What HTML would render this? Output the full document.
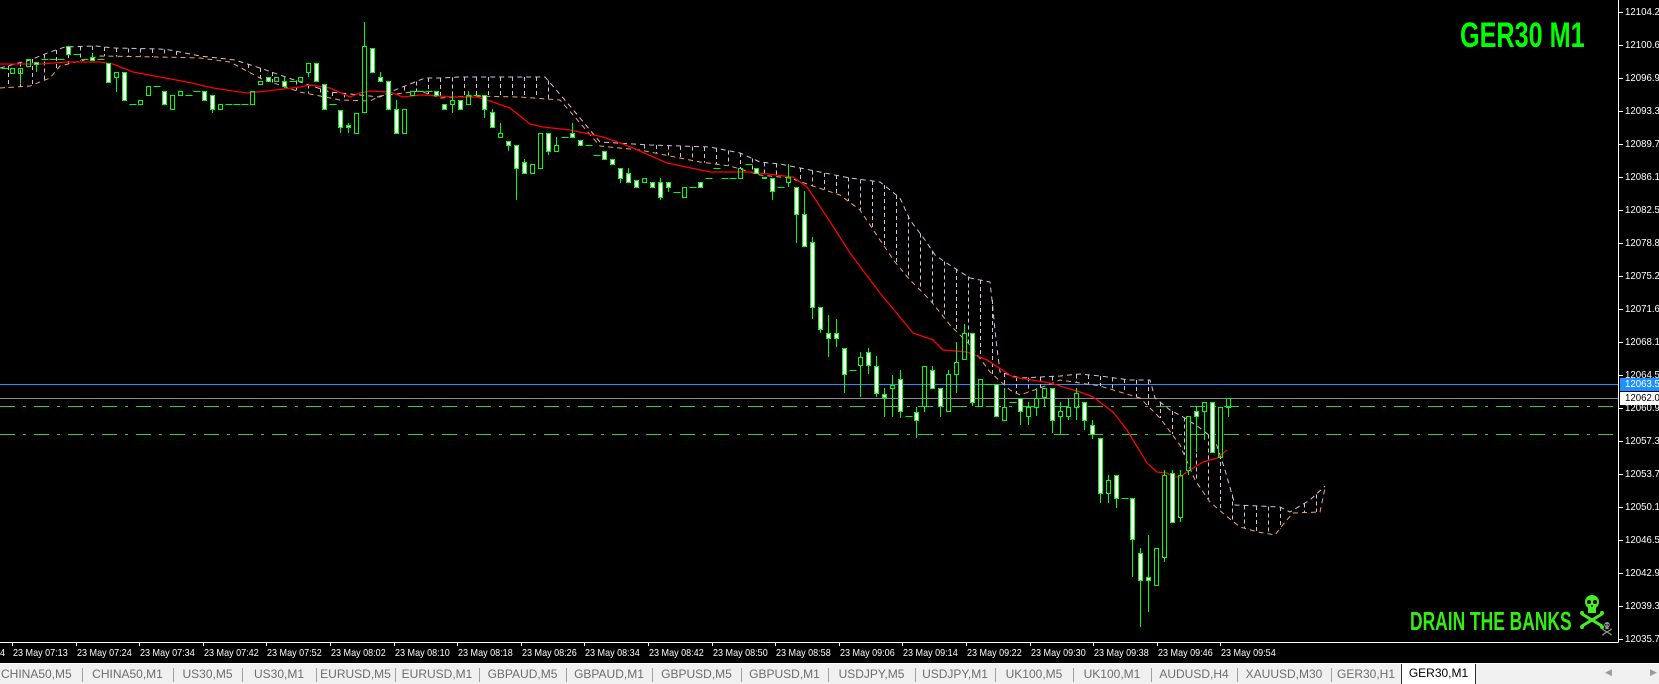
<!DOCTYPE html>
<html><head><meta charset="utf-8">
<style>
html,body{margin:0;padding:0;background:#000;width:1659px;height:684px;overflow:hidden;font-family:"Liberation Sans",sans-serif}
#wrap{position:relative;width:1659px;height:684px;background:#000}
svg{position:absolute;left:0;top:0}
.pl{position:absolute;left:1625px;font-size:10.5px;color:#fff;line-height:12px;white-space:nowrap;transform:scaleX(0.92);transform-origin:left top}
.tl{position:absolute;top:647px;font-size:10.5px;color:#fff;white-space:nowrap;line-height:13px;transform:scaleX(0.86);transform-origin:left top}
#tabs{position:absolute;left:0;top:663px;width:1659px;height:21px;background:#f0f0f0;border-top:1px solid #fff;box-sizing:border-box}
.tab{position:absolute;top:1px;height:20px;font-size:12px;color:#6d6d6d;line-height:19px;text-align:center;white-space:nowrap;box-sizing:border-box}
.sep{position:absolute;top:4px;width:1px;height:14px;background:#a0a0a0}
</style></head><body><div id="wrap">
<svg id="ch" width="1659" height="684" xmlns="http://www.w3.org/2000/svg" shape-rendering="crispEdges"></svg>

<div style="position:absolute;left:1460px;top:16px;font-weight:bold;font-size:35px;color:#00ff00;transform:scaleX(0.72);transform-origin:left top;white-space:nowrap">GER30 M1</div>
<div style="position:absolute;left:1410px;top:606px;font-weight:bold;font-size:26px;color:#33ee11;transform:scaleX(0.67);transform-origin:left top;white-space:nowrap">DRAIN THE BANKS</div>

<div class="pl" style="top:6px">12104.20</div>
<div class="pl" style="top:39px">12100.60</div>
<div class="pl" style="top:72px">12096.90</div>
<div class="pl" style="top:105px">12093.30</div>
<div class="pl" style="top:138px">12089.70</div>
<div class="pl" style="top:171px">12086.10</div>
<div class="pl" style="top:204px">12082.50</div>
<div class="pl" style="top:237px">12078.80</div>
<div class="pl" style="top:270px">12075.20</div>
<div class="pl" style="top:303px">12071.60</div>
<div class="pl" style="top:336px">12068.10</div>
<div class="pl" style="top:369px">12064.50</div>
<div class="pl" style="top:402px">12060.90</div>
<div class="pl" style="top:435px">12057.30</div>
<div class="pl" style="top:468px">12053.70</div>
<div class="pl" style="top:501px">12050.10</div>
<div class="pl" style="top:534px">12046.50</div>
<div class="pl" style="top:567px">12042.90</div>
<div class="pl" style="top:600px">12039.30</div>
<div class="pl" style="top:633px">12035.70</div>
<div style="position:absolute;top:378px;left:1620px;background:#1e90ff;width:39px;height:13px"></div>
<div class="pl" style="top:378px">12063.59</div>
<div style="position:absolute;top:392px;left:1620px;background:#fff;width:39px;height:13px"></div>
<div class="pl" style="top:392px;color:#000">12062.08</div>

<div class="tl" style="left:0">4</div>
<div id="times"></div>

<div id="tabs"></div>
</div>
<script>
var S='http://www.w3.org/2000/svg',svg=document.getElementById('ch');
function el(n,a){var e=document.createElementNS(S,n);for(var k in a)e.setAttribute(k,a[k]);svg.appendChild(e);return e;}
var G='#00ff00';
el('line',{x1:0,y1:642.5,x2:1618.5,y2:642.5,stroke:'#fff'});
el('line',{x1:1618.5,y1:0,x2:1618.5,y2:642.5,stroke:'#fff'});
for(var k=0;k<20;k++){var y=12+33*k;el('line',{x1:1619,y1:y+0.5,x2:1623,y2:y+0.5,stroke:'#fff'});}
el('line',{x1:0,y1:384.5,x2:1618,y2:384.5,stroke:'#1e90ff'});
el('line',{x1:0,y1:398.5,x2:1618,y2:398.5,stroke:'#8c8c8c'});
el('line',{x1:0,y1:406.5,x2:1618,y2:406.5,stroke:'#32cd32','stroke-dasharray':'15 8 3 8'});
el('line',{x1:0,y1:434.5,x2:1618,y2:434.5,stroke:'#32cd32','stroke-dasharray':'15 8 3 8'});
var up=[[0,68],[30,60],[50,52],[65,47],[95,46],[115,48],[160,49],[170,50],[200,56],[235,60],[260,68],[300,82],[330,92],[360,95],[380,97],[390,92],[410,84],[425,78],[440,78],[460,77],[545,77],[570,106],[600,142],[650,145],[710,147],[740,153],[760,162],[780,164],[820,172],[850,178],[880,182],[900,198],[910,220],[925,240],[935,255],[945,262],[970,278],[990,282],[992,300],[996,340],[1000,372],[1020,378],[1060,376],[1080,374],[1100,376],[1130,380],[1150,380],[1155,398],[1170,410],[1185,418],[1200,428],[1215,440],[1225,470],[1235,505],[1280,507],[1290,512],[1310,500],[1325,486]];
var lo=[[0,88],[30,86],[50,78],[60,66],[100,56],[160,57],[200,58],[230,62],[262,79],[300,92],[340,100],[370,101],[380,96],[420,91],[440,98],[470,96],[520,97],[560,100],[600,146],[640,150],[700,162],[730,166],[760,175],[790,178],[810,185],[840,195],[860,210],[880,240],[895,262],[910,280],[930,300],[950,325],[970,345],[990,372],[1010,390],[1020,395],[1040,388],[1060,380],[1100,386],[1140,398],[1160,418],[1180,445],[1195,480],[1210,502],[1225,515],[1240,527],[1258,532],[1275,535],[1285,522],[1293,513],[1320,512],[1325,488]];
function pts(a){return a.map(function(p){return p[0]+','+p[1]}).join(' ')}
function interp(a,x){for(var i=1;i<a.length;i++){if(a[i][0]>=x){var p=a[i-1],q=a[i];return p[1]+(q[1]-p[1])*(x-p[0])/((q[0]-p[0])||1);}}return a[a.length-1][1];}
for(var x=8;x<1325;x+=12){var a=interp(up,x),b=interp(lo,x);if(Math.abs(a-b)>6)el('line',{x1:x+.5,y1:a,x2:x+.5,y2:b,stroke:'#d8bfd8','stroke-dasharray':'4 3'});}
el('polyline',{points:pts(up),fill:'none',stroke:'#d8bfd8','stroke-dasharray':'5 4','shape-rendering':'auto'});
el('polyline',{points:pts(lo),fill:'none',stroke:'#f4a460','stroke-dasharray':'5 4','shape-rendering':'auto'});
var ma=[[0,64],[40,64],[67,62],[100,62],[113,64],[133,72],[160,77],[187,82],[213,88],[233,91],[247,93],[267,91],[283,89],[300,87],[310,85],[330,88],[350,97],[360,93],[370,91],[390,92],[403,97],[420,95],[457,97],[477,97],[487,100],[510,108],[530,124],[543,127],[570,130],[603,137],[623,144],[633,148],[667,163],[710,172],[750,172],[793,177],[807,187],[827,217],[850,253],[880,293],[913,333],[933,340],[943,350],[967,352],[987,360],[1013,377],[1050,383],[1080,392],[1093,397],[1113,412],[1127,430],[1147,463],[1157,472],[1167,473],[1173,477],[1180,477],[1190,470],[1203,462],[1217,458],[1227,450]];
el('polyline',{points:pts(ma),fill:'none',stroke:'#ff0000','stroke-width':1.3,'shape-rendering':'auto'});
var C=[['d',68],['g',68,73],['g',68,73,68,83],['g',59,66],['w',62,64,62,72],['d',59,52,59],['d',59,52,59],['d',59],['w',46,54],['d',54],
['d',59],['w',57,60,53,60],['d',59,54,59],['w',63,82],['g',72,77,72,92],['w',72,100],['d',104],['g',100,104],['g',86,95],['d',86],
['w',91,104],['g',95,109],['g',91,95],['d',95],['d',91],['w',91,100],['w',95,109,95,113],['g',104,109],['d',104],['d',104],
['d',104],['g',91,104],['g',81,84],['w',77,81],['g',77,81],['w',81,86,77,88],['d',81,77,86],['g',77,81],['g',63,72,63,77],['w',63,81],
['w',84,109],['d',104,95,104],['w',110,127,110,133],['w',125,127,123,133],['g',113,133],['g',46,112,22,112],['w',48,72],['w',77,81,72,81],['w',81,109],['w',109,133,100,133],
['g',109,133],['g',91,95],['d',91],['d',91],['w',91,95],['w',104,109],['g',100,104,95,113],['w',100,109],['g',95,104,91,104],['d',95],
['w',95,109,95,118],['w',112,127,109,127],['g',133,137,123,137],['w',141,145,141,151],['w',145,168,145,200],['w',162,173,159,173],['g',164,173],['g',133,168],['w',133,151,133,155],['g',145,151,137,151],
['d',137,127,137],['w',133,137,123,137],['w',140,145],['d',145,141,145],['d',155],['w',151,159],['w',159,164],['w',168,178,168,183],['w',173,182,168,182],['w',180,187],
['g',178,182],['w',182,187],['w',182,197,178,200],['w',182,187,182,192],['d',192,178,197],['g',187,197],['d',187],['w',182,187],['d',178,164,178],['d',168],
['d',178],['d',178],['g',168,178],['d',164,159,164],['w',168,173],['w',177,178],['w',178,191,178,200],['d',187,187,200],['g',177,182,164,187],['w',187,214,187,243],
['w',214,246,191,246],['w',242,307,237,319],['w',307,329,307,333],['w',333,338,315,357],['w',333,338,319,347],['w',348,374,348,393],['d',370,370,425],['g',357,365,352,397],['w',352,365,348,374],['w',366,393,356,397],
['w',394,397,388,417],['g',385,388,375,417],['w',379,411,370,418],['d',416,397,434],['w',412,420,407,438],['g',366,406,366,412],['w',370,388,366,388],['w',388,406,388,417],['g',374,411,370,411],['g',362,374,342,393],
['g',333,359,324,359],['w',333,402,333,406],['g',379,406],['d',384,374,406],['w',384,416],['g',407,420,388,420],['d',402,384,402],['w',398,411,398,425],['g',407,416,402,425],['g',398,407,388,416],
['g',388,397,388,407],['w',388,420,388,433],['g',411,416,402,434],['g',407,416,398,420],['g',393,407,388,420],['w',402,420,402,430],['w',425,434,420,439],['w',438,493,438,503],['g',480,493,475,503],['w',475,498,475,508],
['d',498,489,512],['w',498,539,498,577],['w',553,580,548,627],['w',577,580,535,612],['g',548,585],['g',475,557,470,562],['w',473,522,470,522],['g',475,517,470,522],['g',416,470,416,475],['w',411,416,407,452],
['g',402,411,402,440],['w',402,452],['g',407,457],['g',398,407,398,417]];
C.forEach(function(c,i){var x=4+8*i+.5,t=c[0],a=c[1],b=c[2]||a,wt=c[3]!==undefined?c[3]:a,wb=c[4]!==undefined?c[4]:b;
 if(t=='d'){el('line',{x1:x,y1:Math.min(wt,a),x2:x,y2:Math.max(wb,a)+1,stroke:G});el('line',{x1:x-3,y1:a+.5,x2:x+4,y2:a+.5,stroke:G});return;}
 if(wt<a)el('line',{x1:x,y1:wt,x2:x,y2:a,stroke:G});
 if(wb>b)el('line',{x1:x,y1:b,x2:x,y2:wb,stroke:G});
 el('rect',{x:x-2,y:a+.5,width:4,height:Math.max(b-a,1),fill:t=='w'?'#fff':'none',stroke:G});
});
function sk1(cx,cy,s,col){
 var g=document.createElementNS(S,'g');g.setAttribute('transform','translate('+cx+','+cy+') scale('+s+')');svg.appendChild(g);
 g.innerHTML='<g shape-rendering="auto"><line x1="-10" y1="4" x2="10" y2="16" stroke="'+col+'" stroke-width="3"/><line x1="10" y1="4" x2="-10" y2="16" stroke="'+col+'" stroke-width="3"/>'+
 '<circle cx="-10" cy="3" r="2" fill="'+col+'"/><circle cx="-10" cy="17" r="2" fill="'+col+'"/><circle cx="10" cy="3" r="2" fill="'+col+'"/><circle cx="10" cy="17" r="2" fill="'+col+'"/>'+
 '<ellipse cx="0" cy="-8" rx="7" ry="7" fill="'+col+'"/><rect x="-4" y="-3" width="8" height="6" fill="'+col+'"/>'+
 '<circle cx="-3" cy="-8" r="2" fill="#000"/><circle cx="3" cy="-8" r="2" fill="#000"/><rect x="-0.7" y="-5" width="1.4" height="2" fill="#000"/></g>';}
sk1(1592,610,1,'#44ee22');sk1(1607,628,0.4,'#999');
var T=['07:13','07:24','07:34','07:42','07:52','08:02','08:10','08:18','08:26','08:34','08:42','08:50','08:58','09:06','09:14','09:22','09:30','09:38','09:46','09:54'];
var th='';T.forEach(function(t,k){var x=Math.round(12+63.6*k);el('line',{x1:x+.5,y1:642,x2:x+.5,y2:646,stroke:'#fff'});th+='<div class="tl" style="left:'+(x+1)+'px">23 May '+t+'</div>';});
document.getElementById('times').innerHTML=th;
var B=[0,82,173,242,316,395,479,566,652,741,828,915,995,1073,1151,1237,1331,1401,1476];
var L=['CHINA50,M5','CHINA50,M1','US30,M5','US30,M1','EURUSD,M5','EURUSD,M1','GBPAUD,M5','GBPAUD,M1','GBPUSD,M5','GBPUSD,M1','USDJPY,M5','USDJPY,M1','UK100,M5','UK100,M1','AUDUSD,H4','XAUUSD,M30','GER30,H1','GER30,M1'];
var h='';L.forEach(function(l,i){var a=B[i],b=B[i+1];
 if(i==17)h+='<div class="tab" style="left:'+a+'px;width:'+(b-a)+'px;background:#fff;color:#000;border:1px solid #333;border-top:none;top:0;height:21px">'+l+'</div>';
 else{h+='<div class="tab" style="left:'+a+'px;width:'+(b-a)+'px;'+(i==0?'text-align:left;padding-left:1px':'')+'">'+l+'</div>';if(i>0&&i<17)h+='<div class="sep" style="left:'+a+'px"></div>';}});
h+='<div style="position:absolute;left:1605px;top:3px;font-size:9px;color:#999">&#9664;</div><div style="position:absolute;left:1650px;top:3px;font-size:9px;color:#999">&#9654;</div>';
document.getElementById('tabs').innerHTML=h;
</script>
</body></html>
